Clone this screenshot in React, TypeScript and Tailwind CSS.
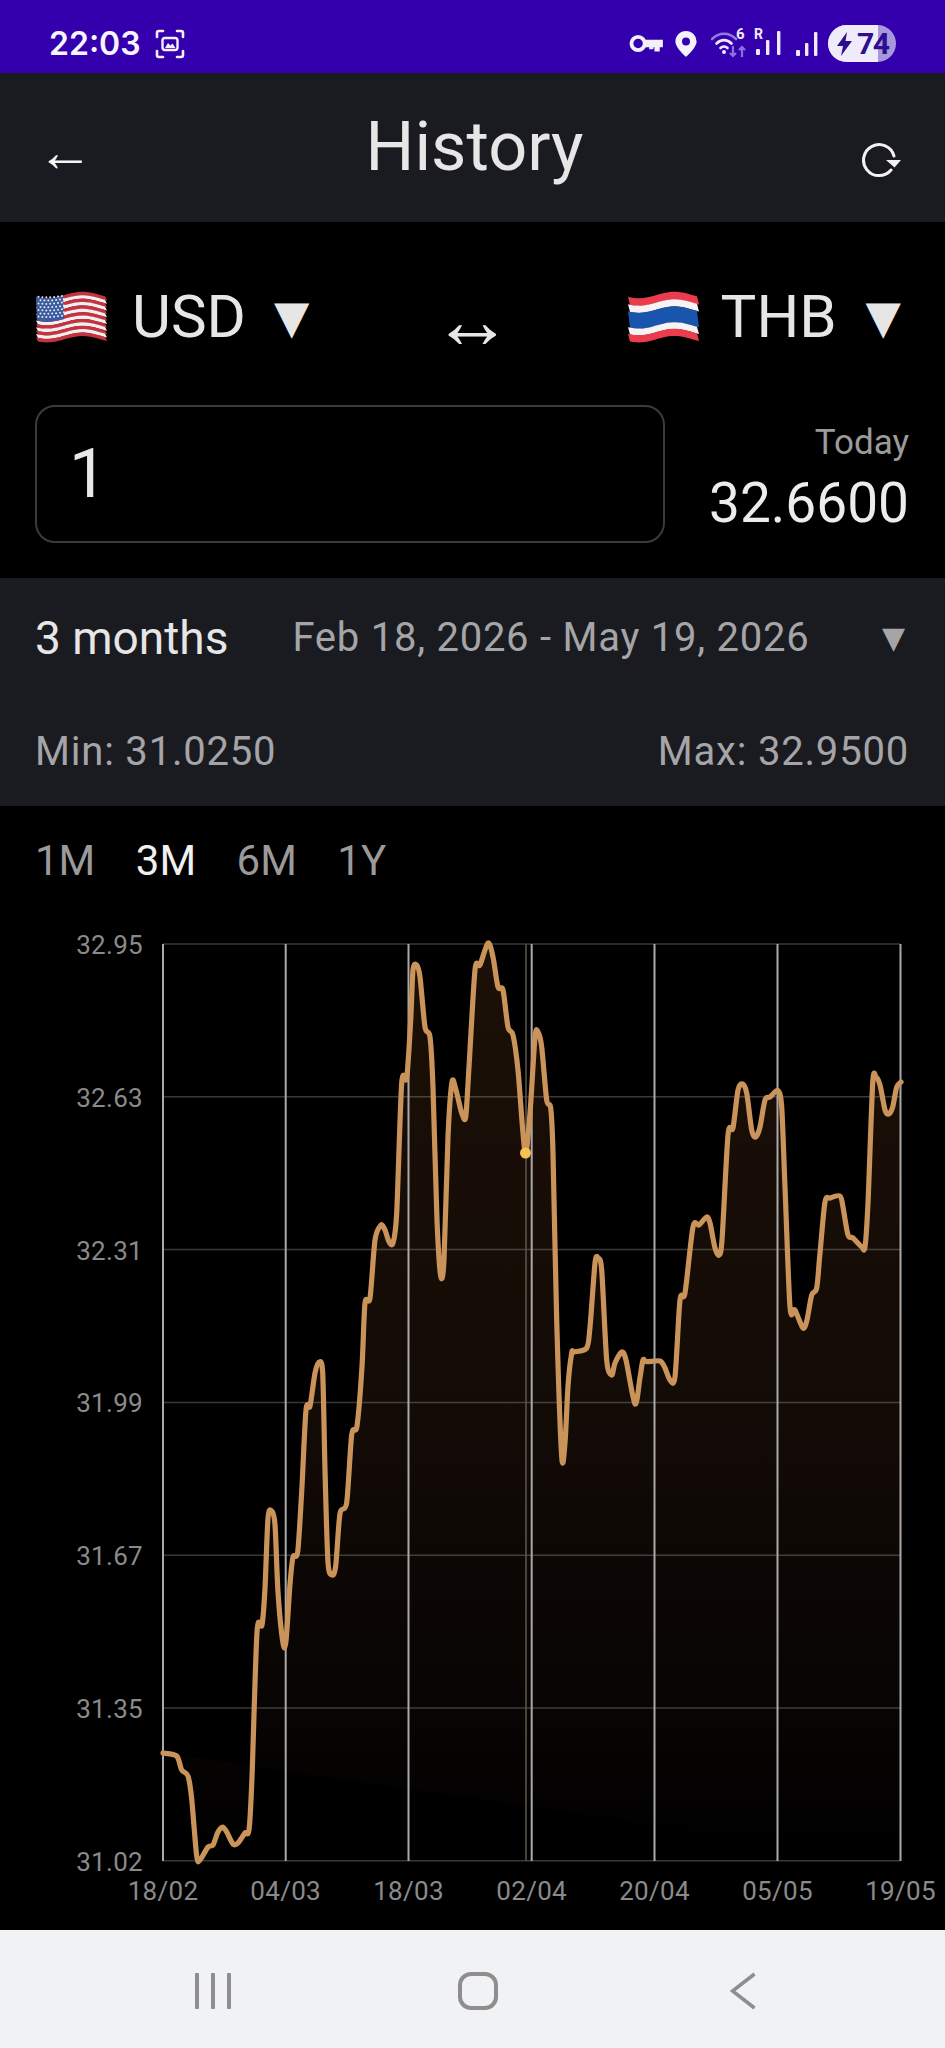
import React from "react";

const pts: [number, number][] = [
  [163,1753],[176.7,1756],[181.7,1770],[188,1776],[191.7,1799],[196.7,1856],[200,1860],[208,1847],[213,1845],[218,1832],[222.7,1827],[226.7,1832],[233,1844],[238,1843],[245,1833],[249,1830],[252,1777],[257,1632],[262,1625],[265,1588],[268,1518],[271.7,1511],[275,1524.5],[278,1592],[283,1643],[286,1641],[290,1584],[293,1557],[297.7,1552],[301.7,1491.6],[306,1410],[310,1406],[315,1373],[319,1362],[322.7,1373],[325,1470],[328,1562],[332,1575],[335.7,1566],[340,1513.6],[346.7,1502.6],[351.7,1434.6],[357,1426],[362,1366.7],[365,1303],[370,1298],[375,1240],[381,1225],[385,1230],[389,1241.7],[393,1243],[396.7,1213],[401.7,1083],[406.7,1078],[410.7,1020],[413,970],[416.7,965],[420,977],[425,1027],[430,1037],[433,1087],[437,1220],[440.7,1276],[444,1260],[448,1137],[452,1082],[456,1090],[461.7,1113],[465.7,1117],[469,1067],[475,970],[480,965],[488,943],[493,957],[498,987],[503,990],[508,1027],[513,1035],[518,1070],[525,1152],[530,1113],[535,1037],[538,1032],[541.7,1047],[546.7,1100],[550.7,1108],[553,1153],[556.7,1320],[561.7,1456.5],[565,1443],[568,1386],[571.7,1353],[574,1352],[586.7,1348],[590,1327],[595,1263],[598,1258],[601.7,1270],[606.7,1360],[611.7,1375],[615,1363],[621.7,1352],[626,1360],[635,1404],[640,1377.5],[643,1360],[646.7,1361.7],[660,1361],[665,1368],[670,1380],[675,1377],[680,1300],[685,1293],[693,1227],[699,1225],[706.7,1217],[710,1223],[715,1248],[719,1255],[722,1240],[728,1135],[733,1128],[738,1090],[742.7,1084],[746.7,1093],[751.7,1130],[755.7,1137],[760,1127],[765,1100],[770,1097],[778,1090.7],[781.7,1107],[785,1187],[790,1307],[795,1310],[803,1328],[807,1320],[811.7,1295],[816.7,1288],[820,1253],[825,1202],[830,1198],[840,1196],[843,1207],[848,1235],[853,1238],[861.7,1247],[865,1247],[868,1203],[872.7,1083],[876,1077],[880,1085],[885,1110],[888.7,1114],[892.7,1107],[896.7,1087],[901,1082],
];

function smooth(p: [number, number][]) {
  let d = `M${p[0][0]} ${p[0][1]}`;
  for (let i = 0; i < p.length - 1; i++) {
    const a = p[Math.max(i - 1, 0)], b = p[i], c = p[i + 1], e = p[Math.min(i + 2, p.length - 1)];
    const t = 0.14;
    d += `C${(b[0] + (c[0] - a[0]) * t).toFixed(1)} ${(b[1] + (c[1] - a[1]) * t).toFixed(1)} ${(c[0] - (e[0] - b[0]) * t).toFixed(1)} ${(c[1] - (e[1] - b[1]) * t).toFixed(1)} ${c[0]} ${c[1]}`;
  }
  return d;
}
const linePath = smooth(pts);

const hLines = [944, 1096.8, 1249.6, 1402.4, 1555.2, 1708, 1860.8];
const vLines = [163, 285.7, 408.5, 531.7, 654.5, 777.5, 900.5];
const yLabels = ["32.95", "32.63", "32.31", "31.99", "31.67", "31.35", "31.02"];
const xLabels = ["18/02", "04/03", "18/03", "02/04", "20/04", "05/05", "19/05"];

function Chart() {
  return (
    <svg width="945" height="1020" viewBox="0 910 945 1020" className="block">
      <defs>
        <linearGradient id="area" x1="0" y1="944" x2="0" y2="1860" gradientUnits="userSpaceOnUse">
          <stop offset="0" stopColor="#1c1007" />
          <stop offset="0.5" stopColor="#130b06" />
          <stop offset="0.85" stopColor="#070403" />
          <stop offset="1" stopColor="#000000" />
        </linearGradient>
      </defs>
      <path d={`${linePath}L900.5 1860.800L163 1753Z`} fill="url(#area)" />
      {hLines.map((y) => (
        <line key={y} x1="163" x2="900" y1={y} y2={y} stroke="#ffffff" strokeOpacity="0.22" strokeWidth="1.5" />
      ))}
      {vLines.map((x) => (
        <line key={x} x1={x} x2={x} y1="944" y2="1861" stroke="#a9a9a9" strokeWidth="2" />
      ))}
      <line x1="526" x2="526" y1="944" y2="1861" stroke="#5f584c" strokeWidth="1.5" />
      <path d={linePath} fill="none" stroke="#c9935a" strokeWidth="5.2" strokeLinejoin="round" strokeLinecap="round" />
      <circle cx="525.5" cy="1153" r="5.5" fill="#f7c050" />
      {yLabels.map((t, i) => (
        <text key={t} x="143" y={hLines[i] + 10} textAnchor="end" fontSize="26" fill="#8a8a8a" letterSpacing="0.3">{t}</text>
      ))}
      {xLabels.map((t, i) => (
        <text key={t} x={vLines[i]} y="1900" textAnchor="middle" fontSize="26" fill="#8a8a8a" letterSpacing="0.3">{t}</text>
      ))}
    </svg>
  );
}

function band(w: number, h: number, v0: number, v1: number, x0 = 0, x1 = w) {
  const f = (x: number, v: number) => {
    const amp = 3.2;
    const y = 4 + v * (h - 8) + amp * Math.sin((x / w) * Math.PI * 2 + 0.6);
    return y.toFixed(1);
  };
  let d = "";
  for (let x = x0; x <= x1 + 0.01; x += 3) d += `${d ? "L" : "M"}${x.toFixed(1)} ${f(x, v0)}`;
  for (let x = x1; x >= x0 - 0.01; x -= 3) d += `L${x.toFixed(1)} ${f(x, v1)}`;
  return d + "Z";
}

function UsFlag() {
  const w = 71, h = 52;
  const stripes = Array.from({ length: 13 }, (_, i) => i);
  const stars: [number, number][] = [];
  for (let r = 0; r < 7; r++) for (let c = 0; c < 7; c++) {
    const x = 2.5 + c * 3.9 + (r % 2 ? 2 : 0);
    const y = 4.5 + r * 3.3 + 1.8 * Math.sin((x / w) * Math.PI * 2 + 0.6);
    stars.push([x, y]);
  }
  return (
    <svg width={w} height={h} viewBox={`0 0 ${w} ${h}`} className="block shrink-0">
      {stripes.map((i) => (
        <path key={i} d={band(w, h, i / 13, (i + 1) / 13 + 0.005)} fill={i % 2 ? "#f3eef0" : "#c8323f"} />
      ))}
      <path d={band(w, h, 0, 7 / 13, 0, 28)} fill="#3a5c9e" />
      {stars.map(([x, y], i) => (
        <circle key={i} cx={x} cy={y} r="1" fill="#e6ebf5" />
      ))}
    </svg>
  );
}

function ThFlag() {
  const w = 71, h = 52;
  const s: [number, number, string][] = [
    [0, 0.17, "#ea3c4d"], [0.17, 0.33, "#f7f3f4"], [0.33, 0.69, "#1a55ad"], [0.69, 0.84, "#f7f3f4"], [0.84, 1, "#ea3c4d"],
  ];
  return (
    <svg width={w} height={h} viewBox={`0 0 ${w} ${h}`} className="block shrink-0">
      {s.map(([a, b, c]) => (
        <path key={a} d={band(w, h, a, b + 0.004)} fill={c} />
      ))}
    </svg>
  );
}

function ScreenshotIcon() {
  return (
    <svg width="30" height="30" viewBox="0 0 30 30" fill="none" stroke="#f3effb" strokeWidth="2.6" strokeLinecap="round" className="block">
      <path d="M2 8V4a2 2 0 0 1 2-2h4M22 2h4a2 2 0 0 1 2 2v4M28 22v4a2 2 0 0 1-2 2h-4M8 28H4a2 2 0 0 1-2-2v-4" />
      <rect x="7.5" y="9" width="15" height="12" rx="2.5" strokeWidth="2.4" />
      <path d="M10 19l3-5 2.5 2.5 2-2 3 4.5z" fill="#f3effb" stroke="none" />
    </svg>
  );
}

function Bars({ h = 24 }: { h?: number }) {
  return (
    <svg width="24" height={h} viewBox="0 0 24 24" fill="#efe9fb" className="block">
      <rect x="0" y="18" width="4" height="6" rx="1" />
      <rect x="9" y="11" width="3.4" height="13" rx="1" />
      <rect x="18" y="0" width="3.4" height="24" rx="1" />
    </svg>
  );
}

function StatusBar() {
  return (
    <div className="flex h-[73px] items-center justify-between bg-[#3400ae] pt-[14px] pr-[49px] pl-[49px]">
      <div className="flex items-center gap-[14px]">
        <span className="text-[32px] leading-none font-semibold text-[#f7f4fd] [font-family:Inter,sans-serif]">22:03</span>
        <ScreenshotIcon />
      </div>
      <div className="flex items-center">
        <svg width="34" height="19" viewBox="0 0 32 18" className="mr-[12px] block">
          <circle cx="8.5" cy="9" r="6.3" fill="none" stroke="#f3effb" strokeWidth="3.6" />
          <path d="M14 5.5h18v7h-3v4h-5v-4h-1v2h-4v-2h-5z" fill="#f3effb" />
        </svg>
        <svg width="22" height="26" viewBox="0 0 22 26" className="mr-[14px] block">
          <path fillRule="evenodd" d="M11 0a10.6 10.6 0 0 1 10.6 10.6C21.6 17 11 26 11 26S.4 17 .4 10.6A10.6 10.6 0 0 1 11 0zm0 6.6a4 4 0 1 0 0 8 4 4 0 0 0 0-8z" fill="#f5f1fc" />
        </svg>
        <div className="relative mr-[8px] h-[28px] w-[35px]">
          <svg width="36" height="28" viewBox="0 0 36 28" fill="none" className="block">
            <path d="M1 9c7-7 17-7 24 0" stroke="#9379e0" strokeWidth="2.6" strokeLinecap="round" />
            <path d="M5.5 13.5c4.500-4.500 10.500-4.500 15 0" stroke="#efe9fb" strokeWidth="2.6" strokeLinecap="round" />
            <path d="M9.500 18c2-2 5-2 7 0" stroke="#efe9fb" strokeWidth="2.6" strokeLinecap="round" />
            <circle cx="13" cy="22" r="2" fill="#efe9fb" />
            <path d="M22 16v10m-3-3l3 3 3-3M31 27V17m-3 3l3-3 3 3" stroke="#8d70df" strokeWidth="2.200" />
          </svg>
          <span className="absolute top-[-3px] left-[25px] text-[15px] leading-none font-bold text-[#efe9fb]">6</span>
        </div>
        <div className="relative mr-[13px] h-[25px] w-[29px]">
          <span className="absolute top-[-4px] left-[0px] text-[14px] leading-none font-bold text-[#efe9fb]">R</span>
          <svg width="28" height="25" viewBox="0 0 28 25" fill="#efe9fb" className="block">
            <rect x="2" y="18" width="4" height="6" rx="1" />
            <rect x="12" y="9" width="3.400" height="15" rx="1" />
            <rect x="23" y="0" width="3.400" height="24" rx="1" />
          </svg>
        </div>
        <div className="mr-[8px]">
          <Bars />
        </div>
        <div className="relative flex h-[37px] w-[68px] items-center overflow-hidden rounded-full bg-[#a897dc]">
          <div className="absolute inset-y-0 left-0 w-[50px] bg-[#f0ebfb]" />
          <svg width="15" height="24" viewBox="0 0 15 24" className="relative ml-[9px] block">
            <path d="M10 0L0 14h6l-2 10L15 9H8.500z" fill="#2b0f8f" />
          </svg>
          <span className="relative ml-[5px] text-[30px] leading-none font-bold tracking-[-1.5px] text-[#2b0f8f]">74</span>
        </div>
      </div>
    </div>
  );
}

function Header() {
  return (
    <div className="flex h-[149px] items-center justify-between bg-[#1a1b20] pr-[42px] pl-[37px]">
      <span className="mt-[8px] text-[56px] leading-none text-[#f5f5f5] [font-family:'Liberation_Sans',sans-serif]">←</span>
      <span className="ml-[-5px] text-[68.5px] leading-none text-[#e6e6e6]">History</span>
      <svg width="42" height="36" viewBox="0 0 42 36" fill="none" stroke="#f2f2f2" strokeWidth="3" strokeLinecap="round" className="mt-[26px] block">
        <path d="M30 27A15.500 15.500 0 1 1 33 13" />
        <path d="M25 17h15l-6.500 7.500z" fill="#f2f2f2" stroke="none" />
      </svg>
    </div>
  );
}

function Caret({ className }: { className: string }) {
  return <span className={`leading-none [font-family:'DejaVu_Sans',sans-serif] ${className}`}>▼</span>;
}

function Currency() {
  return (
    <div className="flex h-[183px] items-start justify-between pr-[44px] pl-[36px]">
      <div className="mt-[65px] flex items-center">
        <UsFlag />
        <span className="ml-[25px] text-[60px] leading-none text-[#e6e6e6]">USD</span>
        <Caret className="ml-[28px] text-[46px] text-[#e6e6e6]" />
      </div>
      <span className="mt-[59px] ml-[8px] text-[80px] leading-none text-[#e6e6e6] [font-family:'Liberation_Sans',sans-serif]">↔</span>
      <div className="mt-[65px] flex items-center">
        <ThFlag />
        <span className="ml-[22px] text-[60px] leading-none text-[#e6e6e6]">THB</span>
        <Caret className="ml-[29px] text-[46px] text-[#e6e6e6]" />
      </div>
    </div>
  );
}

function Amount() {
  return (
    <div className="flex h-[173px] items-start justify-between pr-[36px] pl-[35px]">
      <div className="flex h-[138px] w-[630px] items-center rounded-[20px] border-2 border-[#3b3b3b] pl-[32px]">
        <span className="text-[68px] leading-none text-[#e8e8e8]">1</span>
      </div>
      <div className="mt-[20px] flex flex-col items-end">
        <span className="text-[35px] leading-none text-[#9b9b9b]">Today</span>
        <span className="mt-[16px] text-[55px] leading-none text-[#ececec]">32.6600</span>
      </div>
    </div>
  );
}

function Range() {
  return (
    <div className="flex h-[228px] flex-col bg-[#1a1b20] pr-[36px] pl-[35px]">
      <div className="mt-[37px] flex items-center">
        <span className="text-[46px] leading-none text-[#e6e6e6]">3 months</span>
        <span className="ml-[64px] text-[40px] leading-none tracking-[0.75px] text-[#a5a5a8]">Feb 18, 2026 - May 19, 2026</span>
        <Caret className="mr-[4px] ml-auto text-[30px] text-[#a5a5a8]" />
      </div>
      <div className="mt-[71px] flex items-center justify-between">
        <span className="text-[40px] leading-none tracking-[0.8px] text-[#a5a5a8]">Min: 31.0250</span>
        <span className="text-[40px] leading-none tracking-[0.8px] text-[#a5a5a8]">Max: 32.9500</span>
      </div>
    </div>
  );
}

function Tabs() {
  return (
    <div className="flex h-[104px] items-start gap-[40.500px] pt-[34px] pl-[35px] text-[42px] leading-none text-[#9a9a9a]">
      <span>1M</span>
      <span className="text-[#f0f0f0]">3M</span>
      <span>6M</span>
      <span>1Y</span>
    </div>
  );
}

function NavBar() {
  return (
    <div className="flex h-[118px] items-center bg-[#f1f2f4] pt-[4px] pl-[195px]">
      <svg width="36" height="37" viewBox="0 0 36 37" fill="#8e8e8e" className="block">
        <rect x="0" y="0" width="4" height="36" rx="1" />
        <rect x="16" y="0" width="4" height="36" rx="1" />
        <rect x="32" y="0" width="4" height="36" rx="1" />
      </svg>
      <svg width="40" height="38" viewBox="0 0 40 38" fill="none" stroke="#8e8e8e" strokeWidth="4" className="ml-[227px] block">
        <rect x="2" y="2" width="36" height="34" rx="11" />
      </svg>
      <svg width="26" height="38" viewBox="0 0 26 38" fill="none" stroke="#8e8e8e" strokeWidth="3.600" className="ml-[232px] block">
        <path d="M24.500 2L2.500 19l22 17" />
      </svg>
    </div>
  );
}

export default function App() {
  return (
    <div className="flex h-[2048px] w-[945px] flex-col overflow-hidden bg-black [font-family:Roboto,sans-serif]">
      <StatusBar />
      <Header />
      <Currency />
      <Amount />
      <Range />
      <Tabs />
      <Chart />
      <NavBar />
    </div>
  );
}
